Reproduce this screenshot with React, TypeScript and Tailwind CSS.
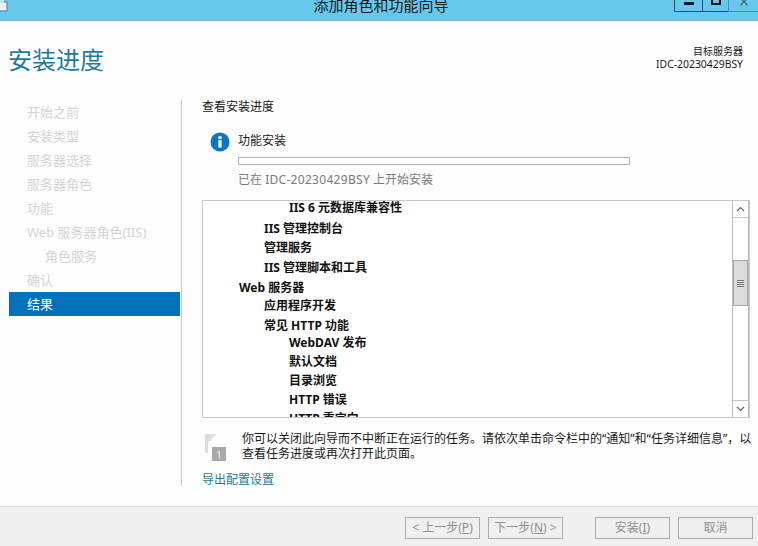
const font = { fontFamily: '"Noto Sans", "Noto Sans CJK SC", sans-serif' };

const nav = [
  { t: "开始之前", c: "pl-[18px] text-[#d4d4d4]" },
  { t: "安装类型", c: "pl-[18px] text-[#d4d4d4]" },
  { t: "服务器选择", c: "pl-[18px] text-[#d4d4d4]" },
  { t: "服务器角色", c: "pl-[18px] text-[#d4d4d4]" },
  { t: "功能", c: "pl-[18px] text-[#d4d4d4]" },
  { t: "Web 服务器角色(IIS)", c: "pl-[18px] text-[#d4d4d4]" },
  { t: "角色服务", c: "pl-9 text-[#d4d4d4]" },
  { t: "确认", c: "pl-[18px] text-[#d4d4d4]" },
  { t: "结果", c: "pl-[18px] pt-[2px] -mt-[1px] text-white bg-[#0072bc]" },
];

const rows = [
  { t: "IIS 6 元数据库兼容性", c: "pl-[86px]" },
  { t: "IIS 管理控制台", c: "pl-[61px] mt-[1px]" },
  { t: "管理服务", c: "pl-[61px] -mt-[1px]" },
  { t: "IIS 管理脚本和工具", c: "pl-[61px]" },
  { t: "Web 服务器", c: "pl-[36px]" },
  { t: "应用程序开发", c: "pl-[61px] -mt-[2px]" },
  { t: "常见 HTTP 功能", c: "pl-[61px]" },
  { t: "WebDAV 发布", c: "pl-[86px] -mt-[3px]" },
  { t: "默认文档", c: "pl-[86px] -mt-[1px]" },
  { t: "目录浏览", c: "pl-[86px] -mt-[1px]" },
  { t: "HTTP 错误", c: "pl-[86px] -mt-[1px]" },
  { t: "HTTP 重定向", c: "pl-[86px] -mt-[1px]" },
];

function Btn({ children, className = "" }: { children: React.ReactNode; className?: string }) {
  return (
    <div className={`w-[75px] h-[22px] border border-[#adadad] bg-[#f0f0f0] flex items-center justify-center text-[12px] text-[#8f8f8f] ${className}`}>
      {children}
    </div>
  );
}

export default function App() {
  return (
    <div className="w-[758px] h-[546px] overflow-hidden flex flex-col bg-[#fdfdfd]" style={font}>
      <div className="h-[21px] shrink-0 bg-[#66c8ec] border-b border-[#7fb0c8] grid grid-cols-[84px_1fr_84px] items-start overflow-hidden">
        <svg width="8" height="12" viewBox="0 0 8 12">
          <rect x="-2" y="2" width="9" height="9" fill="#e8f2f6" stroke="#4d7f96" />
          <rect x="-2" y="0" width="6" height="3" fill="#c9dfe8" />
        </svg>
        <div className="text-center text-[15px] leading-[15px] -mt-[2px] pl-[4px] text-[#1a1a1a]">添加角色和功能向导</div>
        <div className="flex h-[12px]">
          <div className="w-[28px] border-l border-b border-[#3c4c55] flex justify-center items-start pt-[2px]">
            <div className="w-[10px] h-[3px] bg-[#111]" />
          </div>
          <div className="w-[26px] border-l border-b border-[#3c4c55] flex justify-center items-start">
            <div className="w-[10px] h-[5px] border-2 border-t-0 border-[#111]" />
          </div>
          <div className="w-[30px] border-l border-b border-[#5f8798] flex justify-center items-start">
            <svg width="10" height="6" viewBox="0 0 10 6"><path d="M1.5 5.5 L5 1.5 L8.5 5.5 M3.5 0 L5 1.5 L6.5 0" stroke="#4f6f80" strokeWidth="1.5" fill="none" /></svg>
          </div>
        </div>
      </div>

      <div className="h-[79px] shrink-0 flex justify-between">
        <div className="pl-[8px] pt-[21px] text-[24px] leading-[36px] text-[#1f7a9c]">安装进度</div>
        <div className="pr-[15px] pt-[24px] text-right leading-[13px] text-[#1a1a1a]">
          <div className="text-[10px]">目标服务器</div>
          <div className="text-[10.4px]">IDC-20230429BSY</div>
        </div>
      </div>

      <div className="h-[386px] shrink-0 flex">
        <div className="w-[171px] ml-[9px] shrink-0">
          <div className="h-[1px]" />
          {nav.map((n) => (
            <div key={n.t} className={`h-[24px] flex items-center text-[13px] ${n.c}`}>{n.t}</div>
          ))}
        </div>
        <div className="w-[22px] shrink-0 ml-[1px] border-l border-[#c8c8c8]" />
        <div className="flex-1 min-w-0 -ml-[1px]">
          <div className="text-[12px] leading-[14px] text-[#1a1a1a]">查看安装进度</div>
          <div className="flex mt-[18px] pl-[8px]">
            <svg width="20" height="20" viewBox="0 0 20 20" className="shrink-0">
              <circle cx="10" cy="10" r="9.5" fill="#0a74c9" />
              <rect x="8.4" y="8.2" width="3.2" height="7.3" fill="#fff" />
              <rect x="8.4" y="4.3" width="3.2" height="2.8" fill="#fff" />
            </svg>
            <div className="ml-[8px]">
              <div className="text-[12px] leading-[14px] mt-[2px] text-[#1a1a1a]">功能安装</div>
              <div className="w-[392px] h-[8px] mt-[9px] border border-[#b4b4b4] bg-white" />
              <div className="text-[12px] leading-[16px] mt-[7px] text-[#7a7a7a]">已在 <span className="tracking-[0.3px]">IDC-20230429BSY</span> 上开始安装</div>
            </div>
          </div>

          <div className="w-[548px] h-[218px] mt-[12px] border border-[#c8c8c8] bg-white flex">
            <div className="flex-1 min-w-0 overflow-hidden">
              <div className="-mt-[3px]">
                {rows.map((r) => (
                  <div key={r.t} className={`h-[20px] flex items-center text-[12px] font-bold text-[#111] ${r.c}`}>{r.t}</div>
                ))}
              </div>
            </div>
            <div className="w-[17px] shrink-0 border-l border-[#bdbdbd] border-r border-r-[#bdbdbd] flex flex-col">
              <div className="h-[17px] flex items-center justify-center border-b border-[#c8c8c8]">
                <svg width="9" height="6" viewBox="0 0 9 6"><path d="M1 5 L4.5 1.5 L8 5" stroke="#666" strokeWidth="1.2" fill="none" /></svg>
              </div>
              <div className="h-[42px]" />
              <div className="h-[46px] border border-[#a8a8a8] bg-[#dcdcdc] flex flex-col items-center justify-center gap-[1px]">
                <div className="w-[7px] h-[1px] bg-[#777]" />
                <div className="w-[7px] h-[1px] bg-[#777]" />
                <div className="w-[7px] h-[1px] bg-[#777]" />
                <div className="w-[7px] h-[1px] bg-[#777]" />
              </div>
              <div className="flex-1" />
              <div className="h-[17px] flex items-center justify-center border-t border-[#c8c8c8]">
                <svg width="9" height="6" viewBox="0 0 9 6"><path d="M1 1 L4.5 4.5 L8 1" stroke="#666" strokeWidth="1.2" fill="none" /></svg>
              </div>
            </div>
          </div>

          <div className="flex mt-[13px] pl-[3px]">
            <svg width="21" height="27" viewBox="0 0 21 27" className="shrink-0 mt-[3px]">
              <path d="M0 0 H11 L3 9 V19 H0 Z" fill="#dcdcdc" />
              <rect x="7" y="13" width="14" height="14" fill="#a9a9a9" />
              <text x="14" y="24.5" fontSize="11" textAnchor="middle" fill="#eee" fontFamily="Noto Sans">1</text>
            </svg>
            <div className="ml-[16px] w-[515px] text-[12px] leading-[15px] text-[#1a1a1a] whitespace-nowrap">
              <div>你可以关闭此向导而不中断正在运行的任务。请依次单击命令栏中的“通知”和“任务详细信息”，以</div>
              <div>查看任务进度或再次打开此页面。</div>
            </div>
          </div>
          <div className="mt-[11px] text-[12px] leading-[16px] text-[#1f7a9c]">导出配置设置</div>
        </div>
      </div>

      <div className="mt-[20px] flex-1 bg-[#f0f0f0] border-t border-[#dcdcdc] flex items-start justify-end pt-[10px] pr-[5px]">
        <Btn><span>&lt; 上一步(<u>P</u>)</span></Btn>
        <Btn className="ml-[8px]"><span>下一步(<u>N</u>) &gt;</span></Btn>
        <Btn className="ml-[32px]"><span>安装(<u>I</u>)</span></Btn>
        <Btn className="ml-[8px]">取消</Btn>
      </div>
    </div>
  );
}
